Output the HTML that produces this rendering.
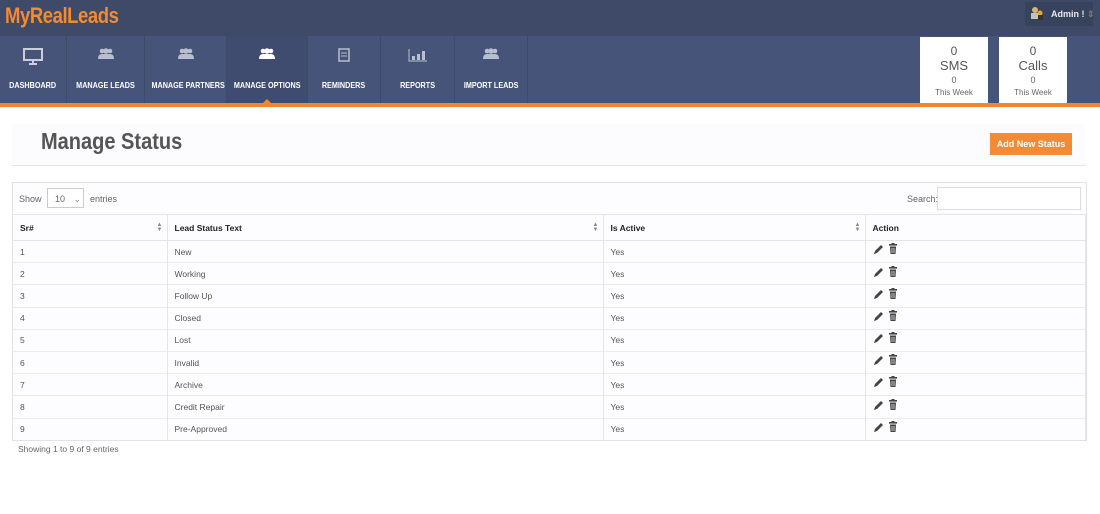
<!DOCTYPE html>
<html><head><style>
*{box-sizing:border-box;margin:0;padding:0}
body{width:1100px;height:514px;background:#fff;font-family:"Liberation Sans",sans-serif;position:relative;overflow:hidden}
.top{position:absolute;left:0;top:0;width:1100px;height:36px;background:#3e4a68}
.logo{position:absolute;left:5px;top:3px;color:#f58a2e;font-size:22px;font-weight:bold;letter-spacing:-0.5px;transform:scaleX(0.84);transform-origin:left}
.admin{position:absolute;left:1025px;top:2px;width:68px;height:24px;background:#37425d;color:#e8e8ee;font-size:9px;font-weight:bold;padding:7px 0 0 26px;white-space:nowrap}
.nav{position:absolute;left:0;top:36px;width:1100px;height:67px;background:#46547a}
.nav .it{position:absolute;top:0;height:67px;border-right:1px solid #3d4a6c;color:#fff;font-size:8.5px;font-weight:bold;text-align:center;padding-top:44px;white-space:nowrap}
.nav .it span{display:inline-block;transform:scaleX(0.85)}
.nav .ic{position:absolute;top:12px;left:50%;transform:translateX(-50%)}
.orange{position:absolute;left:0;top:103px;width:1100px;height:4px;background:#f5872a}
.box{position:absolute;top:37px;width:68px;height:66px;background:#fff;text-align:center;color:#555}
.box .a{font-size:12px;margin-top:7px}.box .b{font-size:13px}.box .c{font-size:9px;margin-top:2px;color:#666}.box .d{font-size:8px;margin-top:3px;color:#666}
.hdr{position:absolute;left:12px;top:124px;width:1074px;height:42px;background:#fcfbfd;border-bottom:1px solid #e6e6ea}
.hdr h1{position:absolute;left:29px;top:4px;font-size:23px;color:#555;font-weight:bold;transform:scaleX(0.87);transform-origin:left}
.btn{position:absolute;left:990px;top:133px;width:82px;height:22px;background:#f58a35;color:#fff;font-size:9px;font-weight:bold;text-align:center;line-height:22px}
.tbl{position:absolute;left:12px;top:182px;width:1075px;border:1px solid #e2e2e6;background:#fdfcfe}
.tool{height:31px;position:relative;font-size:9px;color:#666}
.tool .show{position:absolute;left:6px;top:11px}
.sel{position:absolute;left:34px;top:5px;width:37px;height:20px;border:1px solid #ccc;background:#fff;font-size:9px;padding:5px 0 0 7px}
.tool .ent{position:absolute;left:77px;top:11px}
.tool .sl{position:absolute;left:894px;top:11px}
.srch{position:absolute;left:924px;top:4px;width:144px;height:23px;border:1px solid #ddd;background:#fff}
table{border-collapse:collapse;width:100%;font-size:8.5px;color:#555}
th{height:26px;text-align:left;padding-left:7px;color:#222;font-size:8.5px;border:1px solid #e5e5e9;border-left:none;position:relative;background:#fdfcfe}
td{height:22.2px;padding:0 0 0 7px;border-top:1px solid #ececef;border-right:1px solid #e5e5e9;line-height:10px}
th .s{position:absolute;right:4px;top:8px;font-size:6px;color:#888;line-height:5px}
.foot{position:absolute;left:18px;top:444px;font-size:8.5px;color:#666}
</style></head><body>
<div class="top"><div class="logo">MyRealLeads</div>
<div class="admin"><svg style="position:absolute;left:5px;top:4px" width="14" height="14"><circle cx="5" cy="4" r="3" fill="#d8b27a"/><rect x="1" y="7" width="8" height="6" fill="#c9c2b0"/><circle cx="10" cy="7" r="2.5" fill="#e0a93a"/><rect x="8" y="9" width="5" height="5" fill="#333"/></svg>Admin ! <span style="color:#777">⇕</span></div></div>
<div class="nav">
<div class="it" style="left:0;width:67px"><span>DASHBOARD</span><svg class="ic" width="20" height="18"><rect x="1" y="1" width="18" height="11" fill="none" stroke="#ccd" stroke-width="2"/><rect x="9" y="12" width="2" height="3" fill="#ccd"/><rect x="6" y="15" width="8" height="2" fill="#ccd"/></svg></div>
<div class="it" style="left:67px;width:78px"><span>MANAGE LEADS</span><svg class="ic" width="18" height="12"><circle cx="5" cy="3" r="2.3" fill="#b8bfce"/><circle cx="13" cy="3" r="2.3" fill="#b8bfce"/><circle cx="9" cy="3" r="2.8" fill="#b8bfce"/><path d="M1 11 Q1 6 5 6 L13 6 Q17 6 17 11Z" fill="#b8bfce"/></svg></div>
<div class="it" style="left:145px;width:82px"><span>MANAGE PARTNERS</span><svg class="ic" width="18" height="12"><circle cx="5" cy="3" r="2.3" fill="#b8bfce"/><circle cx="13" cy="3" r="2.3" fill="#b8bfce"/><circle cx="9" cy="3" r="2.8" fill="#b8bfce"/><path d="M1 11 Q1 6 5 6 L13 6 Q17 6 17 11Z" fill="#b8bfce"/></svg></div>
<div class="it" style="left:227px;width:81px;background:#3f4c6f"><span>MANAGE OPTIONS</span><svg class="ic" width="18" height="12"><circle cx="5" cy="3" r="2.3" fill="#fff"/><circle cx="13" cy="3" r="2.3" fill="#fff"/><circle cx="9" cy="3" r="2.8" fill="#fff"/><path d="M1 11 Q1 6 5 6 L13 6 Q17 6 17 11Z" fill="#fff"/></svg><div style="position:absolute;left:36px;top:63px;border:4px solid transparent;border-bottom-color:#f5872a;border-top:0"></div></div>
<div class="it" style="left:308px;width:73px"><span>REMINDERS</span><svg class="ic" width="12" height="14"><rect x="1" y="1" width="10" height="12" fill="none" stroke="#b8bfce" stroke-width="1.5"/><path d="M3 5h6M3 8h6" stroke="#b8bfce"/></svg></div>
<div class="it" style="left:381px;width:74px"><span>REPORTS</span><svg class="ic" width="20" height="14"><path d="M1 1V13H19" stroke="#b8bfce" fill="none"/><rect x="4" y="8" width="3" height="4" fill="#b8bfce"/><rect x="9" y="6" width="3" height="6" fill="#b8bfce"/><rect x="14" y="3" width="3" height="9" fill="#b8bfce"/></svg></div>
<div class="it" style="left:455px;width:73px"><span>IMPORT LEADS</span><svg class="ic" width="18" height="12"><circle cx="5" cy="3" r="2.3" fill="#b8bfce"/><circle cx="13" cy="3" r="2.3" fill="#b8bfce"/><circle cx="9" cy="3" r="2.8" fill="#b8bfce"/><path d="M1 11 Q1 6 5 6 L13 6 Q17 6 17 11Z" fill="#b8bfce"/></svg></div>
</div>
<div class="box" style="left:920px"><div class="a">0</div><div class="b">SMS</div><div class="c">0</div><div class="d">This Week</div></div>
<div class="box" style="left:999px"><div class="a">0</div><div class="b">Calls</div><div class="c">0</div><div class="d">This Week</div></div>
<div class="orange"></div>
<div class="hdr"><h1>Manage Status</h1></div>
<div class="btn">Add New Status</div>
<div class="tbl">
<div class="tool"><span class="show">Show</span><div class="sel">10 <span style="color:#888;margin-left:6px">⌄</span></div><span class="ent">entries</span><span class="sl">Search:</span><div class="srch"></div></div>
<table>
<tr><th style="width:154px">Sr#<span class="s">▲<br>▼</span></th><th style="width:436px">Lead Status Text<span class="s">▲<br>▼</span></th><th style="width:262px">Is Active<span class="s">▲<br>▼</span></th><th>Action</th></tr>
<tbody id="b"></tbody>
</table></div>
<div class="foot">Showing 1 to 9 of 9 entries</div>
<script>
var n=["New","Working","Follow Up","Closed","Lost","Invalid","Archive","Credit Repair","Pre-Approved"],h="";
var ic='<svg width="26" height="12" style="vertical-align:middle;margin-top:-6px"><path d="M1 11 L2 8 L8 2 L10 4 L4 10Z" fill="#444"/><rect x="16" y="1" width="8" height="1.6" fill="#444"/><rect x="18.5" y="0" width="3" height="1.5" fill="#444"/><path d="M17 3.5h6l-0.5 7.5h-5z" fill="#444"/><path d="M19 5v5M21 5v5" stroke="#fdfcfe" stroke-width="0.7"/></svg>';
n.forEach(function(t,i){h+="<tr><td>"+(i+1)+"</td><td>"+t+"</td><td>Yes</td><td>"+ic+"</td></tr>"});
document.getElementById("b").innerHTML=h;
</script>
</body></html>
